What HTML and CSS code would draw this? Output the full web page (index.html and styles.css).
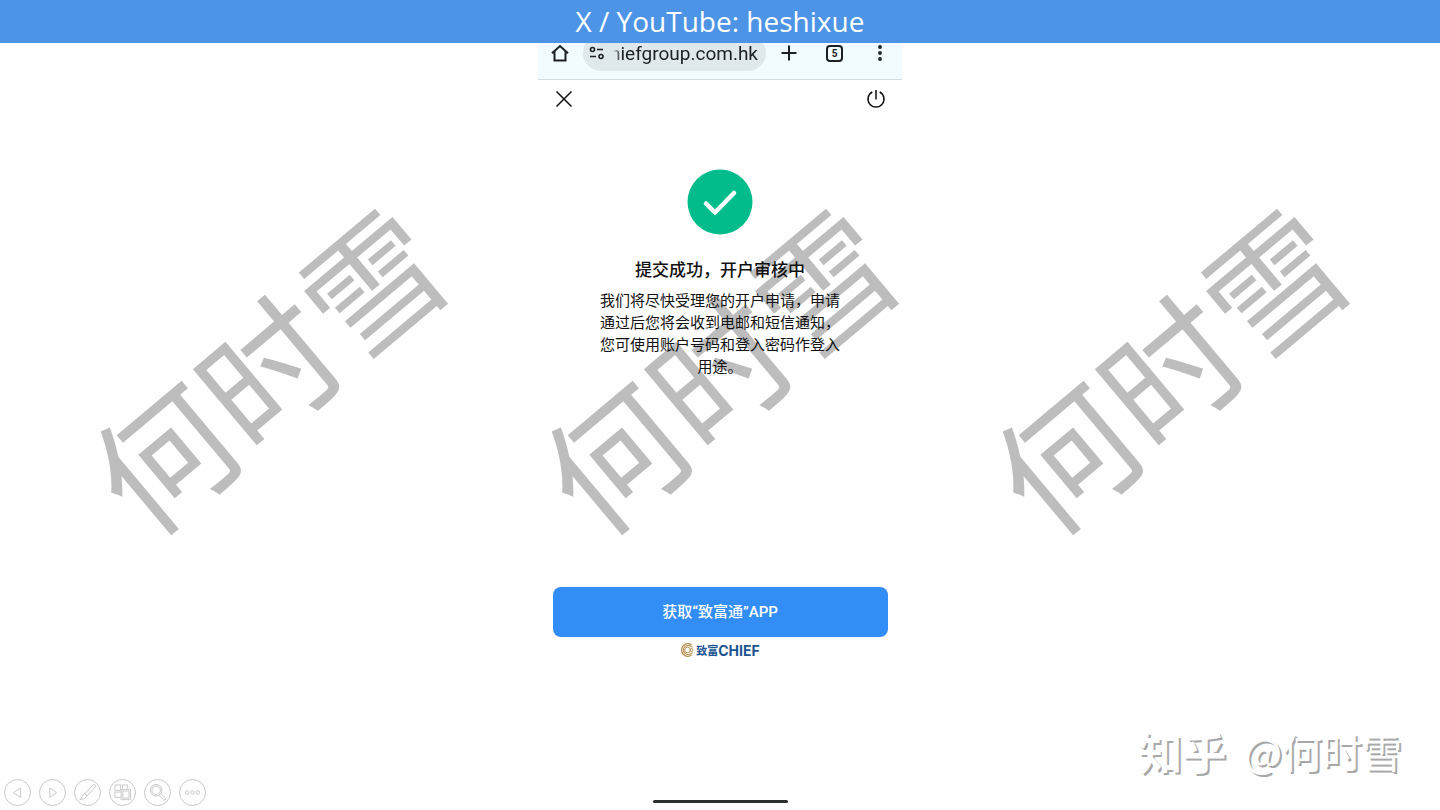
FILE: index.html
```html
<!DOCTYPE html>
<html lang="zh-CN">
<head>
  <meta charset="UTF-8">
  <title>提交成功</title>
  <link rel="stylesheet" href="styles.css">
</head>
<body>
  <header class="banner">X / YouTube: heshixue</header>

  <div class="watermarks" aria-hidden="true">
    <div class="slot"><span>何时雪</span></div>
    <div class="slot"><span>何时雪</span></div>
    <div class="slot"><span>何时雪</span></div>
  </div>

  <main class="phone">
    <div class="browser-bar">
      <button type="button" class="icon-btn" aria-label="Home">
        <svg width="20" height="20" viewBox="0 0 20 20" fill="none" stroke="#1c2024" stroke-width="2"><path d="M2 10.300 10 3l8 7.300M4.500 8.500V17.500h11V8.500"/></svg>
      </button>
      <div class="address">
        <svg width="16" height="14" viewBox="0 0 16 14" fill="none" stroke="#1c2024" stroke-width="1.600"><circle cx="3.500" cy="3.500" r="2"/><path d="M8 3.500h6M1 10.500h6"/><circle cx="12" cy="10.500" r="2"/></svg>
        <span class="url"><span>hiefgroup.com.hk</span></span>
      </div>
      <div class="bar-actions">
        <button type="button" class="icon-btn" aria-label="New tab">
          <svg width="20" height="20" viewBox="0 0 20 20" stroke="#1c2024" stroke-width="2"><path d="M10 2.500v15M2.500 10h15"/></svg>
        </button>
        <button type="button" class="icon-btn tabs" aria-label="Tabs"><span>5</span></button>
        <button type="button" class="icon-btn" aria-label="Menu">
          <svg width="20" height="20" viewBox="0 0 20 20" fill="#1c2024"><circle cx="10" cy="4" r="1.900"/><circle cx="10" cy="10" r="1.900"/><circle cx="10" cy="16" r="1.900"/></svg>
        </button>
      </div>
    </div>

    <div class="page-nav">
      <button type="button" class="icon-btn" aria-label="关闭">
        <svg width="20" height="20" viewBox="0 0 20 20" stroke="#111" stroke-width="1.500"><path d="M2.500 2.500l15 15M17.500 2.500l-15 15"/></svg>
      </button>
      <button type="button" class="icon-btn" aria-label="退出">
        <svg width="20" height="20" viewBox="0 0 20 20" fill="none" stroke="#111" stroke-width="1.500"><path d="M10 1v9.500M6.300 3A8 8 0 1 0 13.700 3"/></svg>
      </button>
    </div>

    <section class="result">
      <svg class="check" width="66" height="66" viewBox="0 0 66 66"><circle cx="33" cy="33" r="32.500" fill="#02bc8c"/><path d="M19 34.500 28 43.500 47 24" fill="none" stroke="#fff" stroke-width="4.500" stroke-linecap="round" stroke-linejoin="round"/></svg>
      <h1>提交成功，开户审核中</h1>
      <p>我们将尽快受理您的开户申请，申请通过后您将会收到电邮和短信通知，您可使用账户号码和登入密码作登入用途。</p>
    </section>

    <button type="button" class="get-app">获取“致富通”APP</button>

    <div class="brand">
      <svg width="14" height="14" viewBox="0 0 14 14" fill="none" stroke="#b8924f"><path d="M11.500 2A6.200 6.200 0 1 0 11.500 12" stroke-width="1.500"/><path d="M12.500 4.500A5 4.500 0 1 0 12.500 9.500" stroke-width="1.200"/><circle cx="7.500" cy="7" r="2.800"/><circle cx="11.500" cy="7" r="1.500"/></svg>
      <span class="brand-cn">致富</span><span class="brand-en">CHIEF</span>
    </div>
  </main>

  <footer class="footer">
    <div class="slide-tools">
      <button type="button" aria-label="Previous"><svg viewBox="0 0 28 28"><path d="M17.500 9v10.500L9.500 14.200z"/></svg></button>
      <button type="button" aria-label="Next"><svg viewBox="0 0 28 28"><path d="M11 9v10.500l7.500-5.300z"/></svg></button>
      <button type="button" aria-label="Pen"><svg viewBox="0 0 28 28"><path d="M22.500 5.500c1 .6 1 1.500.3 2.300l-9 9.700-2.600-2.400 9-9.500c.7-.7 1.500-.6 2.300-.1zM11 15.300l2.600 2.400c-1.500 3.200-4.500 3.600-8 4.300 2-1.500 2-4.900 5.400-6.700z"/></svg></button>
      <button type="button" aria-label="All slides"><svg viewBox="0 0 28 28"><path d="M5.500 11.500v-6H12v6zM14 9.500v-4h5.500v4M12 13.500H5.500v6H12M12.500 10.500H23v11.500H12.500zM14.300 12.300h7v8h-7z"/></svg></button>
      <button type="button" aria-label="Zoom"><svg viewBox="0 0 28 28"><circle cx="12.500" cy="11.500" r="6.500"/><circle cx="12.500" cy="11.500" r="4.800"/><path d="M15.800 17.200l5 5c1.500.9 3-.9 1.800-2.200l-5-4.900"/></svg></button>
      <button type="button" aria-label="More"><svg viewBox="0 0 28 28"><circle cx="8" cy="14" r="2"/><circle cx="14" cy="14" r="2"/><circle cx="20" cy="14" r="2"/></svg></button>
    </div>
    <div class="home-indicator"></div>
    <div class="credit"><b>知乎</b><span>@何时雪</span></div>
  </footer>
</body>
</html>
```

FILE: styles.css
```css
* { box-sizing: border-box; }
body {
  margin: 0; min-height: 100vh; position: relative; overflow: hidden;
  display: flex; flex-direction: column;
  background: #fefefe; color: #111;
  font-family: Roboto, "Noto Sans CJK SC", sans-serif;
}
button { font-family: inherit; padding: 0; border: none; background: none; cursor: pointer; }
svg { display: block; }

.banner {
  position: relative; z-index: 2; height: 43px; line-height: 42px;
  background: #4d94e6; color: #fff; text-align: center;
  font-family: "Open Sans", sans-serif; font-size: 28px;
}

/* diagonal name marks behind the page */
.watermarks {
  position: absolute; top: 0; left: 8px; right: 0; height: 752px;
  display: flex; justify-content: center; align-items: center;
}
.slot { flex: 0 0 451px; display: flex; justify-content: center; }
.slot span {
  font-size: 136px; line-height: 136px; white-space: nowrap;
  color: #bdbdbd; transform: rotate(-40deg);
}

.phone { position: relative; width: 364px; margin: -8px auto 0; }
.icon-btn { width: 20px; height: 20px; display: flex; align-items: center; justify-content: center; }

.browser-bar {
  display: flex; align-items: center; gap: 13px;
  height: 45px; padding: 0 12px 8px; background: #f0fcfd;
  border-bottom: 1px solid #cfdfe2;
}
.bar-actions { flex: 1; display: flex; justify-content: space-between; }
.address {
  display: flex; align-items: center; gap: 8px;
  width: 183px; height: 36px; padding: 0 8px 0 6px;
  border-radius: 18px; background: #dfe8ea;
}
/* long hosts keep their end visible and fade out on the left */
.url {
  flex: 1; display: flex; justify-content: flex-end; overflow: hidden;
  padding-top: 2px; color: #1c2024; font-size: 19px; line-height: 28px;
  -webkit-mask-image: linear-gradient(to right, transparent, #000 8px);
  mask-image: linear-gradient(to right, transparent, #000 8px);
}
.tabs span {
  width: 17px; height: 17px; border: 2px solid #1c2024; border-radius: 4px;
  font-size: 10px; line-height: 13px; font-weight: 700; color: #1c2024;
}

.page-nav { display: flex; justify-content: space-between; padding: 9px 16px; }

.result { display: flex; flex-direction: column; align-items: center; padding-top: 51px; }
.result h1 { margin: 23px 0 8px; font-size: 17px; line-height: 24px; font-weight: 500; }
.result p { width: 240px; margin: 0; font-size: 15px; line-height: 22px; text-align: center; }

.get-app {
  display: block; width: 335px; height: 50px; margin: 209px auto 0; padding-bottom: 4px;
  border-radius: 8px; background: #338df7; color: #fff;
  font-size: 15px; font-weight: 500;
}

.brand { display: flex; justify-content: center; align-items: center; height: 14px; margin-top: 6px; color: #1b5490; }
.brand-cn { margin-left: 2px; font-size: 11px; font-weight: 700; }
.brand-en { font-family: Inter, sans-serif; font-size: 14px; font-weight: 700; }

.footer {
  position: relative; margin-top: auto; height: 84px; padding: 0 38px 4px 4px;
  display: flex; justify-content: space-between; align-items: flex-end;
}
.slide-tools { display: flex; gap: 8px; }
.slide-tools button { width: 27px; height: 27px; border: 1px solid #c8c8c8; border-radius: 50%; }
.slide-tools svg { width: 25px; height: 25px; fill: none; stroke: #c4c4c4; stroke-width: 1; }
.home-indicator {
  position: absolute; bottom: 7px; left: 50%; width: 135px; height: 3px;
  margin-left: -67px; border-radius: 2px; background: #2c302e;
}
.credit {
  display: flex; align-items: center; gap: 18px; align-self: flex-start;
  height: 50px; color: #fefefe; font-size: 40px; line-height: 50px;
  font-family: "Noto Sans CJK SC", sans-serif;
  text-shadow: 2px 2px 0 #a8a8a8;
}
.credit b { font-size: 44px; font-weight: 700; }
```
